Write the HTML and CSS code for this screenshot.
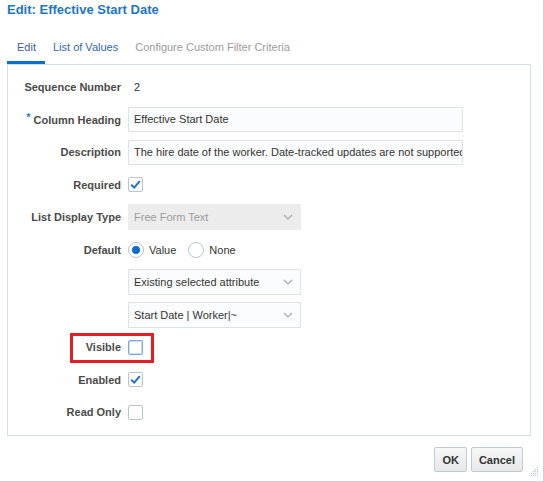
FILE: index.html
```html
<!DOCTYPE html>
<html>
<head>
<meta charset="utf-8">
<link rel="stylesheet" href="styles.css">
</head>
<body>
<div class="dialog">
  <h1 class="title">Edit: Effective Start Date</h1>
  <div class="tabs">
    <span class="tab tab-active">Edit</span>
    <span class="tab tab-link">List of Values</span>
    <span class="tab tab-disabled">Configure Custom Filter Criteria</span>
  </div>
  <div class="panel">
    <div class="row">
      <label class="label">Sequence Number</label>
      <span class="static">2</span>
    </div>
    <div class="row">
      <label class="label"><span class="req">*</span> Column Heading</label>
      <div class="input wide">Effective Start Date</div>
    </div>
    <div class="row">
      <label class="label">Description</label>
      <div class="input wide">The hire date of the worker. Date-tracked updates are not supported.</div>
    </div>
    <div class="row">
      <label class="label">Required</label>
      <span class="check"><svg width="15" height="15" viewBox="0 0 15 15"><polyline points="3.2,7.6 6.2,10.6 11.8,4.2" fill="none" stroke="#1a6fc9" stroke-width="2"/></svg></span>
    </div>
    <div class="row">
      <label class="label">List Display Type</label>
      <div class="select disabled"><span>Free Form Text</span><svg class="chev" width="10" height="6" viewBox="0 0 10 6"><polyline points="1,1 5,5 9,1" fill="none" stroke="#a9a9a9" stroke-width="1.2"/></svg></div>
    </div>
    <div class="row">
      <label class="label">Default</label>
      <div class="radios">
        <span class="radio on"><span class="dot"></span></span><span class="rtext">Value</span>
        <span class="radio second"></span><span class="rtext">None</span>
      </div>
    </div>
    <div class="row">
      <label class="label"></label>
      <div class="select"><span>Existing selected attribute</span><svg class="chev" width="10" height="6" viewBox="0 0 10 6"><polyline points="1,1 5,5 9,1" fill="none" stroke="#a9a9a9" stroke-width="1.2"/></svg></div>
    </div>
    <div class="row">
      <label class="label"></label>
      <div class="select"><span>Start Date | Worker|~</span><svg class="chev" width="10" height="6" viewBox="0 0 10 6"><polyline points="1,1 5,5 9,1" fill="none" stroke="#a9a9a9" stroke-width="1.2"/></svg></div>
    </div>
    <div class="row row-mark">
      <label class="label">Visible</label>
      <span class="check focus"></span>
      <span class="highlight"></span>
    </div>
    <div class="row">
      <label class="label">Enabled</label>
      <span class="check"><svg width="15" height="15" viewBox="0 0 15 15"><polyline points="3.2,7.6 6.2,10.6 11.8,4.2" fill="none" stroke="#1a6fc9" stroke-width="2"/></svg></span>
    </div>
    <div class="row">
      <label class="label">Read Only</label>
      <span class="check"></span>
    </div>
  </div>
  <div class="footer">
    <button class="btn">OK</button>
    <button class="btn">Cancel</button>
  </div>
  <svg class="grip" width="10" height="10" viewBox="0 0 10 10">
    <g fill="#b9c0c7">
      <rect x="8" y="0" width="1" height="1"/>
      <rect x="6" y="2" width="1" height="1"/><rect x="8" y="2" width="1" height="1"/>
      <rect x="4" y="4" width="1" height="1"/><rect x="6" y="4" width="1" height="1"/><rect x="8" y="4" width="1" height="1"/>
      <rect x="2" y="6" width="1" height="1"/><rect x="4" y="6" width="1" height="1"/><rect x="6" y="6" width="1" height="1"/><rect x="8" y="6" width="1" height="1"/>
      <rect x="0" y="8" width="1" height="1"/><rect x="2" y="8" width="1" height="1"/><rect x="4" y="8" width="1" height="1"/><rect x="6" y="8" width="1" height="1"/><rect x="8" y="8" width="1" height="1"/>
    </g>
  </svg>
</div>
</body>
</html>
```
FILE: styles.css
```css
html, body {
  margin: 0;
  padding: 0;
  background: #ffffff;
}
body {
  font-family: "Liberation Sans", Arial, sans-serif;
  font-size: 11px;
  color: #333333;
}
.dialog {
  position: relative;
  width: 544px;
  height: 482px;
  box-sizing: border-box;
  border-right: 1px solid #c9d2db;
  border-bottom: 1px solid #c9d2db;
  background: #ffffff;
}
.title {
  margin: 0;
  padding: 2px 0 0 7px;
  font-size: 13px;
  line-height: 16px;
  font-weight: bold;
  color: #1f76c8;
}
.tabs {
  display: flex;
  margin: 21px 0 0 7px;
  height: 25px;
}
.tab {
  line-height: 16px;
  height: 16px;
  padding-bottom: 6px;
  border-bottom: 3px solid transparent;
}
.tab-active {
  padding-left: 10px;
  padding-right: 9px;
  color: #3d5c9a;
  border-bottom-color: #0a70d0;
}
.tab-link {
  margin-left: 8px;
  color: #2f67b3;
}
.tab-disabled {
  margin-left: 17px;
  color: #9a9a9a;
}
.panel {
  margin-left: 7px;
  width: 524px;
  height: 372px;
  box-sizing: border-box;
  border: 1px solid #d6dde4;
  padding-top: 9.5px;
  display: flex;
  flex-direction: column;
  gap: 7.5px;
}
.row {
  display: flex;
  align-items: center;
  height: 25px;
  gap: 7px;
}
.row-mark {
  position: relative;
}
.label {
  width: 113px;
  flex: none;
  text-align: right;
  font-weight: bold;
  color: #4a4a4a;
}
.req {
  color: #2a7ccc;
  position: relative;
  top: -3px;
}
.static {
  padding-left: 6px;
  color: #333333;
}
.input {
  box-sizing: border-box;
  height: 25px;
  line-height: 23px;
  border: 1px solid #dde2e8;
  border-radius: 1px;
  background: #fbfcfd;
  padding: 0 5px;
  white-space: nowrap;
  overflow: hidden;
  color: #333333;
}
.wide {
  width: 335px;
}
.select {
  box-sizing: border-box;
  width: 173px;
  height: 26px;
  border: 1px solid #dde2e8;
  background: #fbfcfd;
  padding: 0 7px 0 5px;
  display: flex;
  align-items: center;
  justify-content: space-between;
  color: #333333;
}
.select.disabled {
  background: #ececec;
  border-color: #ececec;
  color: #9c9c9c;
}
.chev {
  display: block;
}
.check {
  box-sizing: border-box;
  width: 15px;
  height: 15px;
  border: 1px solid #b9c3cd;
  border-radius: 2px;
  background: #ffffff;
  display: flex;
  align-items: center;
  justify-content: center;
  flex: none;
}
.check svg {
  display: block;
  margin: -1px;
}
.check.focus {
  border: 1px solid #7da7e6;
  box-shadow: inset 0 0 0 1px #c9dbf6;
}
.highlight {
  position: absolute;
  left: 62px;
  top: -1.5px;
  width: 84px;
  height: 30px;
  box-sizing: border-box;
  border: 3px solid #e51e26;
}
.radios {
  display: flex;
  align-items: center;
}
.radio {
  box-sizing: border-box;
  width: 16px;
  height: 16px;
  border: 1px solid #b9c3cd;
  border-radius: 50%;
  background: #ffffff;
  display: flex;
  align-items: center;
  justify-content: center;
}
.radio.second {
  margin-left: 12px;
}
.dot {
  width: 8px;
  height: 8px;
  border-radius: 50%;
  background: #0a6fd0;
}
.rtext {
  margin-left: 5px;
  color: #333333;
}
.footer {
  display: flex;
  justify-content: flex-end;
  gap: 4px;
  padding-right: 20px;
  margin-top: 11px;
}
.btn {
  font-family: "Liberation Sans", Arial, sans-serif;
  font-size: 11px;
  font-weight: bold;
  color: #333333;
  height: 25px;
  padding: 0 7px;
  border: 1px solid #c3cad1;
  border-radius: 2px;
  background: linear-gradient(#f7f7f7, #e6e8ea);
}
.grip {
  position: absolute;
  right: 4px;
  bottom: 4px;
}
```
